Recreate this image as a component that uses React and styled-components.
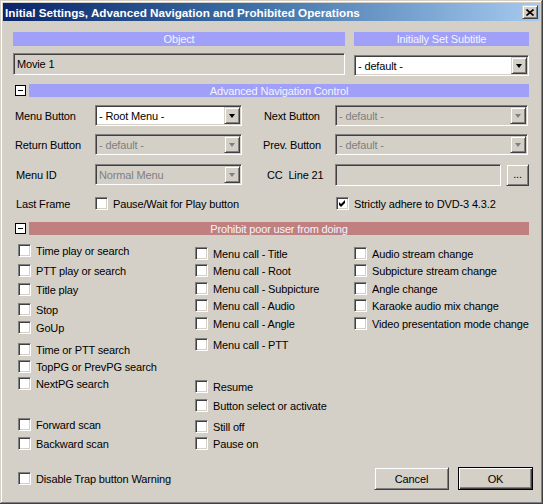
import React from 'react'
import styled, { createGlobalStyle } from 'styled-components'

const GlobalStyle = createGlobalStyle`
  html, body {
    margin: 0;
    padding: 0;
    background: #d4d0c8;
  }
  body {
    font-family: "Liberation Sans", Arial, sans-serif;
    font-size: 11px;
    color: #000;
  }
  * { box-sizing: border-box; }
`

const FACE = '#d4d0c8'

const sunken = `
  border: 1px solid;
  border-color: #808080 #fff #fff #808080;
  box-shadow: inset 1px 1px #404040, inset -1px -1px ${FACE};
`

const raised = `
  border: 1px solid;
  border-color: ${FACE} #404040 #404040 ${FACE};
  box-shadow: inset 1px 1px #fff, inset -1px -1px #808080;
`

const Window = styled.div`
  width: 543px;
  height: 504px;
  padding: 3px;
  background: ${FACE};
  box-shadow: inset -1px -1px #404040, inset 1px 1px ${FACE}, inset -2px -2px #808080, inset 2px 2px #fff;
  letter-spacing: -0.15px;
`

const TitleBar = styled.div`
  height: 18px;
  display: flex;
  align-items: center;
  justify-content: space-between;
  padding: 0 2px 0 2px;
  background: linear-gradient(to right, #0a246a 0%, #3a6ea5 45%, #a6caf0 100%);
`

const Title = styled.span`
  color: #fff;
  font-weight: bold;
  font-size: 11.7px;
  letter-spacing: 0;
  white-space: nowrap;
`

const CloseButton = styled.div`
  width: 16px;
  height: 14px;
  background: ${FACE};
  ${raised}
  display: flex;
  align-items: center;
  justify-content: center;
`

const Body = styled.div`
  padding: 11px 11px 0 10px;
`

const TopGrid = styled.div`
  display: grid;
  grid-template-columns: 332px 175px;
  grid-template-rows: 14px 23px;
  column-gap: 9px;
  row-gap: 7px;
`

const HeaderBar = styled.div`
  height: ${p => p.$h || 14}px;
  background: ${p => (p.$tone === 'red' ? '#c08080' : '#a0a0f8')};
  color: #f4f4ff;
  font-size: 11px;
  display: flex;
  align-items: center;
  justify-content: center;
  white-space: nowrap;
  flex: 1;
`

const TextField = styled.div`
  width: ${p => p.$w}px;
  height: 22px;
  ${sunken}
  background: ${FACE};
  padding-left: 3px;
  display: flex;
  align-items: center;
  margin-top: ${p => p.$mt || 0}px;
`

const SelectBox = styled.div`
  width: ${p => p.$w}px;
  height: 21px;
  ${sunken}
  background: ${p => (p.$disabled ? FACE : '#fff')};
  color: ${p => (p.$disabled ? '#808080' : '#000')};
  display: flex;
  align-items: center;
  justify-content: space-between;
  padding: 2px 1px 2px 3px;
  margin-top: ${p => p.$mt || 0}px;
`

const ArrowButton = styled.div`
  width: 16px;
  height: 17px;
  background: ${FACE};
  ${raised}
  display: flex;
  align-items: center;
  justify-content: center;
  &::after {
    content: '';
    width: 0;
    height: 0;
    border-left: 3.5px solid transparent;
    border-right: 3.5px solid transparent;
    border-top: 4px solid ${p => (p.$disabled ? '#808080' : '#000')};
  }
`

const Select = ({ value, w, disabled, mt }) => (
  <SelectBox $w={w} $disabled={disabled} $mt={mt}>
    <span>{value}</span>
    <ArrowButton $disabled={disabled} />
  </SelectBox>
)

const SectionRow = styled.div`
  display: flex;
  align-items: center;
  gap: 3px;
  margin-top: ${p => p.$mt}px;
  padding-left: 2px;
`

const Toggle = styled.div`
  width: 11px;
  height: 11px;
  border: 1px solid #000;
  background: #fff;
  display: flex;
  align-items: center;
  justify-content: center;
  &::after {
    content: '';
    width: 5px;
    height: 1px;
    background: #000;
  }
`

const SectionHeader = ({ title, tone, mt }) => (
  <SectionRow $mt={mt}>
    <Toggle />
    <HeaderBar $tone={tone} $h={13}>{title}</HeaderBar>
  </SectionRow>
)

const NavGrid = styled.div`
  display: grid;
  grid-template-columns: 80px 146px 94px 194px;
  grid-template-rows: 29px 30px 33px 13px;
  align-items: start;
  margin-top: 8px;
  margin-left: 2px;
`

const FieldLabel = styled.div`
  height: ${p => p.$h || 21}px;
  display: flex;
  align-items: center;
  padding-left: ${p => p.$pl || 0}px;
  white-space: nowrap;
`

const FieldPair = styled.div`
  display: flex;
  gap: 5px;
`

const SmallButton = styled.div`
  width: 23px;
  height: 22px;
  background: ${FACE};
  ${raised}
  display: flex;
  align-items: center;
  justify-content: center;
  padding-bottom: 2px;
`

const CheckRow = styled.div`
  display: flex;
  align-items: center;
  gap: 5px;
  height: 13px;
  margin-top: ${p => p.$gap || 0}px;
  margin-left: ${p => p.$ml || 0}px;
  white-space: nowrap;
`

const Box = styled.div`
  width: 13px;
  height: 13px;
  flex: none;
  background: #fff;
  ${sunken}
  display: flex;
  align-items: center;
  justify-content: center;
`

const Check = ({ label, checked, gap, ml }) => (
  <CheckRow $gap={gap} $ml={ml}>
    <Box>
      {checked && (
        <svg width="7" height="7" viewBox="0 0 7 7">
          <path d="M0 2 L2 4 L6 0 L6 3 L2 7 L0 5 Z" fill="#000" />
        </svg>
      )}
    </Box>
    <span>{label}</span>
  </CheckRow>
)

const ProhibitGrid = styled.div`
  display: grid;
  grid-template-columns: 177px 159px 1fr;
  padding-left: 5px;
  align-items: start;
`

const Column = styled.div`
  display: flex;
  flex-direction: column;
`

const Footer = styled.div`
  display: flex;
  align-items: center;
  justify-content: space-between;
  margin-top: 17px;
  margin-right: -4px;
  padding-left: 5px;
`

const ButtonRow = styled.div`
  display: flex;
  gap: 9px;
`

const DialogButton = styled.div`
  width: 75px;
  height: 23px;
  background: ${FACE};
  display: flex;
  align-items: center;
  justify-content: center;
  font-size: 11px;
  ${p =>
    p.$default
      ? `border: 1px solid #000; box-shadow: inset 1px 1px #fff, inset -1px -1px #404040, inset -2px -2px #808080;`
      : raised}
`

const col1 = [
  ['Time play or search', 9],
  ['PTT play or search', 7],
  ['Title play', 6],
  ['Stop', 7],
  ['GoUp', 5],
  ['Time or PTT search', 9],
  ['TopPG or PrevPG search', 4],
  ['NextPG search', 4],
  ['Forward scan', 28],
  ['Backward scan', 6],
]

const col2 = [
  ['Menu call - Title', 12],
  ['Menu call - Root', 4],
  ['Menu call - Subpicture', 5],
  ['Menu call - Audio', 4],
  ['Menu call - Angle', 5],
  ['Menu call - PTT', 8],
  ['Resume', 29],
  ['Button select or activate', 6],
  ['Still off', 8],
  ['Pause on', 4],
]

const col3 = [
  ['Audio stream change', 12],
  ['Subpicture stream change', 4],
  ['Angle change', 5],
  ['Karaoke audio mix change', 4],
  ['Video presentation mode change', 5],
]

const App = () => {
  return (
    <>
      <GlobalStyle />
      <Window>
        <TitleBar>
          <Title>Initial Settings, Advanced Navigation and Prohibited Operations</Title>
          <CloseButton>
            <svg width="8" height="7" viewBox="0 0 8 7">
              <path d="M0.5 0.5 L7.5 6.5 M7.5 0.5 L0.5 6.5" stroke="#000" strokeWidth="1.6" />
            </svg>
          </CloseButton>
        </TitleBar>
        <Body>
          <TopGrid>
            <HeaderBar>Object</HeaderBar>
            <HeaderBar>Initially Set Subtitle</HeaderBar>
            <TextField $w={332}>Movie 1</TextField>
            <Select value="- default -" w={175} mt={2} />
          </TopGrid>

          <SectionHeader title="Advanced Navigation Control" mt={8} />

          <NavGrid>
            <FieldLabel>Menu Button</FieldLabel>
            <Select value="- Root Menu -" w={147} />
            <FieldLabel $pl={23}>Next Button</FieldLabel>
            <Select value="- default -" w={193} disabled />

            <FieldLabel>Return Button</FieldLabel>
            <Select value="- default -" w={147} disabled />
            <FieldLabel $pl={22}>Prev. Button</FieldLabel>
            <Select value="- default -" w={193} disabled />

            <FieldLabel $pl={1}>Menu ID</FieldLabel>
            <Select value="Normal Menu" w={147} disabled />
            <FieldLabel $pl={26}>CC&nbsp;&nbsp;Line 21</FieldLabel>
            <FieldPair>
              <TextField $w={166} />
              <SmallButton>...</SmallButton>
            </FieldPair>

            <FieldLabel $h={13} $pl={1}>Last Frame</FieldLabel>
            <Check label="Pause/Wait for Play button" />
            <span />
            <Check label="Strictly adhere to DVD-3 4.3.2" checked ml={1} />
          </NavGrid>

          <SectionHeader title="Prohibit poor user from doing" tone="red" mt={12} />

          <ProhibitGrid>
            <Column>
              {col1.map(([label, gap]) => (
                <Check key={label} label={label} gap={gap} />
              ))}
            </Column>
            <Column>
              {col2.map(([label, gap]) => (
                <Check key={label} label={label} gap={gap} />
              ))}
            </Column>
            <Column>
              {col3.map(([label, gap]) => (
                <Check key={label} label={label} gap={gap} />
              ))}
            </Column>
          </ProhibitGrid>

          <Footer>
            <Check label="Disable Trap button Warning" />
            <ButtonRow>
              <DialogButton>Cancel</DialogButton>
              <DialogButton $default>OK</DialogButton>
            </ButtonRow>
          </Footer>
        </Body>
      </Window>
    </>
  )
}

export default App
